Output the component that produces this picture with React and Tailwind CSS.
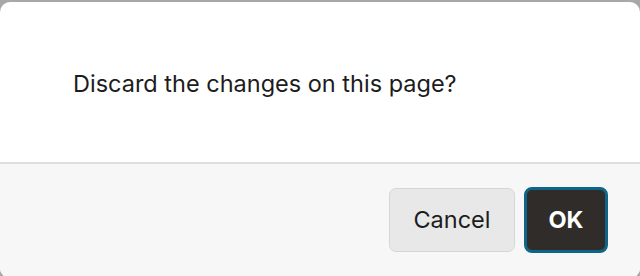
import React from 'react';

export default function App() {
    return (
        <div className="w-[640px] h-[276px] overflow-hidden bg-[#a8a8a8] pt-[2px]" style={{ fontFamily: 'Inter, "Noto Sans", sans-serif' }}>
            <div className="h-[276px] rounded-[10px] bg-white flex flex-col overflow-hidden">
                <div className="h-[160px] flex items-center pl-[73px] pt-[3px]">
                    <p className="text-[23.5px] text-[#1c1c1c]">Discard the changes on this page?</p>
                </div>
                <div className="flex-1 bg-[#f7f7f7] border-t-[2px] border-[#dedede] flex justify-end items-start pt-[23px] pr-[32px] gap-[9px]">
                    <button className="w-[126px] h-[64px] mt-[1px] rounded-[7px] bg-[#e8e8e8] border border-[#d6d6d6] text-[23.5px] text-[#1c1c1c]">
                        Cancel
                    </button>
                    <button className="w-[84px] h-[66px] rounded-[8px] bg-[#2f2c29] border-[3px] border-[#0f6585] text-[23.5px] font-bold text-white">
                        OK
                    </button>
                </div>
            </div>
        </div>
    );
}
